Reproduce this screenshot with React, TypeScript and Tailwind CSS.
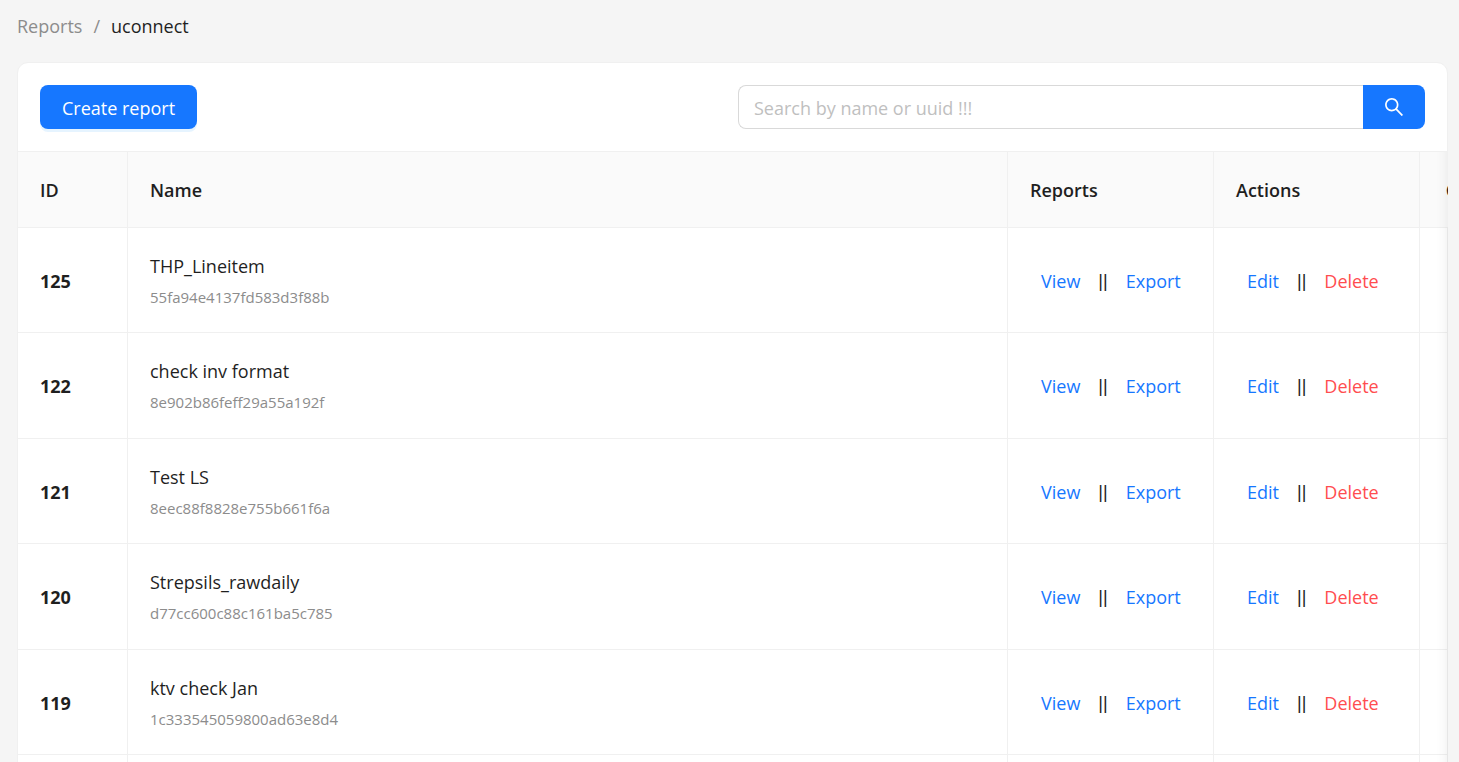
const reports = [
  { id: 125, name: "THP_Lineitem", uuid: "55fa94e4137fd583d3f88b" },
  { id: 122, name: "check inv format", uuid: "8e902b86feff29a55a192f" },
  { id: 121, name: "Test LS", uuid: "8eec88f8828e755b661f6a" },
  { id: 120, name: "Strepsils_rawdaily", uuid: "d77cc600c88c161ba5c785" },
  { id: 119, name: "ktv check Jan", uuid: "1c333545059800ad63e8d4" },
];

function Breadcrumb() {
  return (
    <nav aria-label="Breadcrumb" className="text-[18px] leading-[30px]">
      <ol className="flex gap-[11px]">
        <li>
          <a href="#reports" className="text-[#8c8c8c]">Reports</a>
        </li>
        <li aria-hidden="true" className="text-[#8c8c8c]">/</li>
        <li aria-current="page" className="text-[#1f1f1f]">uconnect</li>
      </ol>
    </nav>
  );
}

function SearchIcon() {
  return (
    <svg viewBox="64 64 896 896" width="20" height="20" fill="currentColor" aria-hidden="true">
      <path d="M909.6 854.5L649.9 594.8C690.2 542.7 712 479 712 412c0-80.2-31.3-155.4-87.9-212.1-56.6-56.7-132-87.9-212.1-87.9s-155.5 31.3-212.1 87.9C143.2 256.5 112 331.8 112 412c0 80.1 31.3 155.5 87.9 212.1C256.5 680.8 331.8 712 412 712c67 0 130.6-21.8 182.7-62l259.7 259.6a8.2 8.2 0 0011.6 0l43.6-43.5a8.2 8.2 0 000-11.6zM570.4 570.4C528 612.7 471.8 636 412 636s-116-23.3-158.4-65.6C211.3 528 188 471.8 188 412s23.3-116.1 65.6-158.4C296 211.3 352.2 188 412 188s116.1 23.2 158.4 65.6S636 352.2 636 412s-23.3 116.1-65.6 158.4z" />
    </svg>
  );
}

function Toolbar() {
  return (
    <div className="flex items-center justify-between p-[22px]">
      <button
        type="button"
        className="h-11 rounded-lg bg-[#1677ff] px-[22px] pt-0.5 text-[18px] text-white shadow-[0_3px_0_rgba(5,145,255,0.1)]"
      >
        Create report
      </button>
      <form role="search" className="flex h-11 w-1/2 max-w-[687px]" onSubmit={(e) => e.preventDefault()}>
        <input
          type="text"
          aria-label="Search by name or uuid"
          placeholder="Search by name or uuid !!!"
          className="min-w-0 flex-1 rounded-l-lg border border-r-0 border-[#d9d9d9] bg-white px-[15px] pt-0.5 text-[18px] text-[#1f1f1f] outline-none placeholder:text-[#bfbfbf]"
        />
        <button
          type="submit"
          aria-label="Search"
          className="flex w-[62px] items-center justify-center rounded-r-lg bg-[#1677ff] text-white"
        >
          <SearchIcon />
        </button>
      </form>
    </div>
  );
}

function Divider() {
  return <span className="font-['Liberation_Sans',sans-serif]">||</span>;
}

function ReportTable() {
  const th = "border-b border-r border-[#f0f0f0] px-[22px] pt-0.5 text-left font-semibold";
  const td = "border-b border-r border-[#f0f0f0] px-[22px] pt-0.5";
  const link = "px-[11px] text-[#1677ff]";
  return (
    <div className="relative -mr-px overflow-hidden border-t border-[#f0f0f0]">
      <table className="w-[calc(100%+116px)] table-fixed border-separate border-spacing-0 text-[18px] leading-[31px] text-[#1f1f1f]">
        <colgroup>
          <col className="w-[110px]" />
          <col />
          <col className="w-[206px]" />
          <col className="w-[206px]" />
          <col className="w-[144px]" />
        </colgroup>
        <thead className="bg-[#fafafa]">
          <tr className="h-[76px]">
            <th scope="col" className={th}>ID</th>
            <th scope="col" className={th}>Name</th>
            <th scope="col" className={th}>Reports</th>
            <th scope="col" className={th}>Actions</th>
            <th scope="col" className="border-b border-[#f0f0f0] pt-0.5 text-center font-semibold">Created At</th>
          </tr>
        </thead>
        <tbody>
          {reports.map((r) => (
            <tr key={r.id} className="h-[105px] even:h-[106px]">
              <th scope="row" className="border-b border-r border-[#f0f0f0] px-[22px] pt-0.5 text-left font-bold">{r.id}</th>
              <td className="border-b border-r border-[#f0f0f0] px-[22px] pt-[3px]">
                <div>{r.name}</div>
                <div className="text-[15px] text-[#8c8c8c]">{r.uuid}</div>
              </td>
              <td className={td}>
                <div className="flex items-center gap-[7px]">
                  <a href={`#view-${r.id}`} className={link}>View</a>
                  <Divider />
                  <a href={`#export-${r.id}`} className={link}>Export</a>
                </div>
              </td>
              <td className={td}>
                <div className="flex items-center gap-[7px]">
                  <a href={`#edit-${r.id}`} className={link}>Edit</a>
                  <Divider />
                  <button type="button" className="px-[11px] text-[#ff4d4f]">Delete</button>
                </div>
              </td>
              <td className="border-b border-[#f0f0f0]" />
            </tr>
          ))}
          <tr className="h-[106px]">
            <td className={td} />
            <td className={td} />
            <td className={td} />
            <td className={td} />
            <td className="border-b border-[#f0f0f0]" />
          </tr>
        </tbody>
      </table>
      <div className="pointer-events-none absolute inset-y-0 right-0 w-10 shadow-[inset_-14px_0_11px_-11px_rgba(5,5,5,0.06)]" />
    </div>
  );
}

export default function App() {
  return (
    <main className="h-screen overflow-hidden bg-[#f5f5f5] pl-[17px] pr-[11px] pt-[11px] font-['Open_Sans','Noto_Sans',sans-serif]">
      <Breadcrumb />
      <section className="mt-[21px] rounded-t-[11px] border border-[#f0f0f0] bg-white">
        <Toolbar />
        <ReportTable />
      </section>
    </main>
  );
}
